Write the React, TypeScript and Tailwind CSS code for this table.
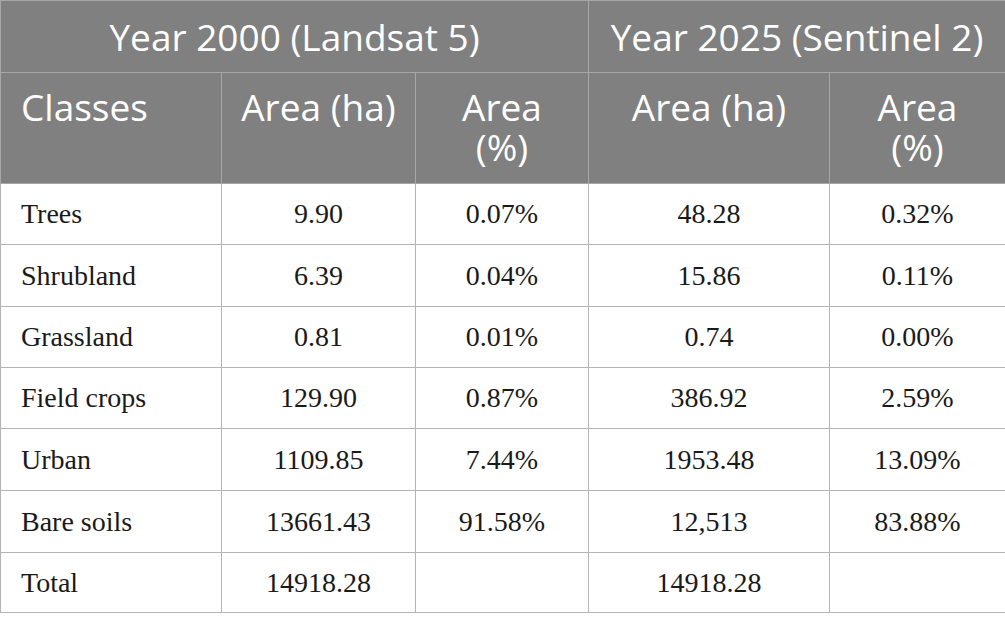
import React from "react";

const rows: [string, string, string, string, string, number][] = [
  ["Trees", "9.90", "0.07%", "48.28", "0.32%", 61],
  ["Shrubland", "6.39", "0.04%", "15.86", "0.11%", 62],
  ["Grassland", "0.81", "0.01%", "0.74", "0.00%", 61],
  ["Field crops", "129.90", "0.87%", "386.92", "2.59%", 61],
  ["Urban", "1109.85", "7.44%", "1953.48", "13.09%", 62],
  ["Bare soils", "13661.43", "91.58%", "12,513", "83.88%", 62],
  ["Total", "14918.28", "", "14918.28", "", 60],
];

export default function App() {
  const head = "border border-[#a8a8a8] text-white font-normal";
  const cell = "border border-[#b4b4b4] text-center align-middle p-0";
  return (
    <div className="w-[1005px] h-[631px] bg-white">
      <table
        className="border-collapse table-fixed w-[1005px]"
        style={{ fontFamily: '"Liberation Serif", serif' }}
      >
        <colgroup>
          <col className="w-[221px]" />
          <col className="w-[194px]" />
          <col className="w-[173px]" />
          <col className="w-[241px]" />
          <col className="w-[176px]" />
        </colgroup>
        <thead
          className="bg-[#808080]"
          style={{ fontFamily: '"Open Sans", sans-serif' }}
        >
          <tr>
            <th
              colSpan={3}
              className={`${head} h-[72px] text-[37px] leading-[40px] text-center align-middle`}
            >
              Year 2000 (Landsat 5)
            </th>
            <th
              colSpan={2}
              className={`${head} h-[72px] text-[37px] leading-[40px] text-center align-middle`}
            >
              Year 2025 (Sentinel 2)
            </th>
          </tr>
          <tr>
            <th className={`${head} h-[111px] text-[37px] leading-[40px] text-left align-top pl-[20px] pt-[14px]`}>
              Classes
            </th>
            <th className={`${head} h-[111px] text-[37px] leading-[40px] text-center align-top pt-[14px]`}>
              Area (ha)
            </th>
            <th className={`${head} h-[111px] text-[37px] leading-[40px] text-center align-top pt-[14px]`}>
              Area
              <br />
              (%)
            </th>
            <th className={`${head} h-[111px] text-[37px] leading-[40px] text-center align-top pt-[14px]`}>
              Area (ha)
            </th>
            <th className={`${head} h-[111px] text-[37px] leading-[40px] text-center align-top pt-[14px]`}>
              Area
              <br />
              (%)
            </th>
          </tr>
        </thead>
        <tbody className="text-[28px] text-[#1a1a1a]">
          {rows.map((r) => (
            <tr key={r[0]}>
              <td
                className="border border-[#b4b4b4] text-left align-middle pl-[20px]"
                style={{ height: r[5] }}
              >
                {r[0]}
              </td>
              <td className={cell}>{r[1]}</td>
              <td className={cell}>{r[2]}</td>
              <td className={cell}>{r[3]}</td>
              <td className={cell}>{r[4]}</td>
            </tr>
          ))}
        </tbody>
      </table>
    </div>
  );
}
